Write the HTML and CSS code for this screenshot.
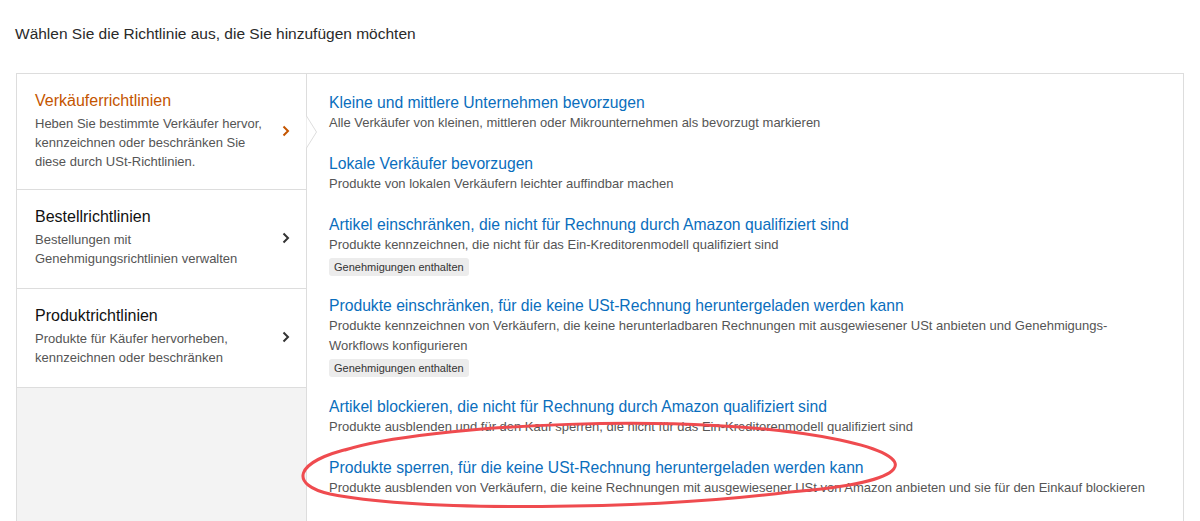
FILE: index.html
```html
<!DOCTYPE html>
<html lang="de">
<head>
<meta charset="UTF-8"/>
<title>Richtlinie hinzufügen</title>
<link rel="stylesheet" href="styles.css">
</head>
<body>
<div class="page">
  <h1 class="heading">Wählen Sie die Richtlinie aus, die Sie hinzufügen möchten</h1>

  <div class="picker">
    <div class="cats">
      <div class="cat active">
        <div class="cat-text">
          <div class="cat-title">Verkäuferrichtlinien</div>
          <div class="cat-desc">Heben Sie bestimmte Verkäufer hervor, kennzeichnen oder beschränken Sie diese durch USt-Richtlinien.</div>
        </div>
        <svg class="chev" width="8" height="12" viewBox="0 0 8 12"><path d="M1.5 1.5 L6 6 L1.5 10.5" fill="none" stroke="currentColor" stroke-width="2"/></svg>
        <svg class="notch" width="12" height="32" viewBox="0 0 12 32"><path d="M0.5 0 L10.5 16 L0.5 32" fill="#fff" stroke="#dddddd" stroke-width="1"/></svg>
      </div>
      <div class="cat">
        <div class="cat-text">
          <div class="cat-title">Bestellrichtlinien</div>
          <div class="cat-desc">Bestellungen mit<br>Genehmigungsrichtlinien verwalten</div>
        </div>
        <svg class="chev" width="8" height="12" viewBox="0 0 8 12"><path d="M1.5 1.5 L6 6 L1.5 10.5" fill="none" stroke="currentColor" stroke-width="2"/></svg>
      </div>
      <div class="cat">
        <div class="cat-text">
          <div class="cat-title">Produktrichtlinien</div>
          <div class="cat-desc">Produkte für Käufer hervorheben, kennzeichnen oder beschränken</div>
        </div>
        <svg class="chev" width="8" height="12" viewBox="0 0 8 12"><path d="M1.5 1.5 L6 6 L1.5 10.5" fill="none" stroke="currentColor" stroke-width="2"/></svg>
      </div>
    </div>

    <div class="policies">
      <div class="policy">
        <a class="policy-title" href="#">Kleine und mittlere Unternehmen bevorzugen</a>
        <div class="policy-desc">Alle Verkäufer von kleinen, mittleren oder Mikrounternehmen als bevorzugt markieren</div>
      </div>
      <div class="policy">
        <a class="policy-title" href="#">Lokale Verkäufer bevorzugen</a>
        <div class="policy-desc">Produkte von lokalen Verkäufern leichter auffindbar machen</div>
      </div>
      <div class="policy">
        <a class="policy-title" href="#">Artikel einschränken, die nicht für Rechnung durch Amazon qualifiziert sind</a>
        <div class="policy-desc">Produkte kennzeichnen, die nicht für das Ein-Kreditorenmodell qualifiziert sind</div>
        <span class="badge">Genehmigungen enthalten</span>
      </div>
      <div class="policy">
        <a class="policy-title" href="#">Produkte einschränken, für die keine USt-Rechnung heruntergeladen werden kann</a>
        <div class="policy-desc">Produkte kennzeichnen von Verkäufern, die keine herunterladbaren Rechnungen mit ausgewiesener USt anbieten und Genehmigungs-<br>Workflows konfigurieren</div>
        <span class="badge">Genehmigungen enthalten</span>
      </div>
      <div class="policy">
        <a class="policy-title" href="#">Artikel blockieren, die nicht für Rechnung durch Amazon qualifiziert sind</a>
        <div class="policy-desc">Produkte ausblenden und für den Kauf sperren, die nicht für das Ein-Kreditorenmodell qualifiziert sind</div>
      </div>
      <div class="policy">
        <a class="policy-title" href="#">Produkte sperren, für die keine USt-Rechnung heruntergeladen werden kann</a>
        <div class="policy-desc">Produkte ausblenden von Verkäufern, die keine Rechnungen mit ausgewiesener USt von Amazon anbieten und sie für den Einkauf blockieren</div>
      </div>
    </div>
  </div>

  <!-- hand drawn highlight -->
  <svg class="mark" width="1200" height="521" viewBox="0 0 1200 521">
    <path d="M345 450 C420 425, 700 410, 840 440 C925 458, 915 482, 790 492 C650 510, 420 512, 330 494 C290 485, 292 462, 352 448" fill="none" stroke="#ef4b4f" stroke-width="3" stroke-linecap="round"/>
  </svg>
</div>
</body>
</html>
```

FILE: styles.css
```css
body {
  margin: 0;
  background: #fff;
  font-family: "Liberation Sans", Arial, sans-serif;
  color: #333;
}
.page {
  position: relative;
  height: 521px;
  overflow: hidden;
}
.heading {
  margin: 0; padding: 24px 15px 0;
  font-size: 15.5px; font-weight: normal;
  line-height: 20px; color: #2a2a2a;
}
.picker {
  display: flex;
  margin: 29px 0 0 16px;
  width: 1166px;
  border: 1px solid #dddddd;
}
.cats {
  width: 289px;
  background: #f3f3f3;
  border-right: 1px solid #dddddd;
}
.cat {
  position: relative;
  display: flex; align-items: center;
  background: #fff;
  padding: 17px 16px 20px 18px;
  border-bottom: 1px solid #dddddd;
}
.cat.active { padding-bottom: 18px; }
.cat-text { flex: 1; }
.cat-title {
  font-size: 16px; line-height: 20px;
  color: #111; margin-bottom: 3px;
}
.cat-desc {
  font-size: 13px; line-height: 19px;
  color: #555; width: 235px;
}
.chev { color: #333; }
.active .cat-title, .active .chev { color: #c45500; }
.notch {
  position: absolute;
  right: -12px; top: 50%;
  margin-top: -16px;
}
.policies {
  flex: 1;
  padding: 18px 22px 8px;
}
.policy {
  margin-bottom: 20px;
}
.policy-title {
  display: block;
  font-size: 15.7px; line-height: 21px;
  color: #0a6ebd; text-decoration: none;
}
.policy-desc {
  font-size: 13px; line-height: 20px;
  color: #555;
}
.badge {
  display: inline-block;
  margin-top: 3px; margin-bottom: -1px;
  padding: 0 5px;
  font-size: 11px; line-height: 18px;
  color: #333; background: #ececec;
  border-radius: 3px;
}
.mark {
  position: absolute; left: 0; top: 0;
  pointer-events: none;
}
```
